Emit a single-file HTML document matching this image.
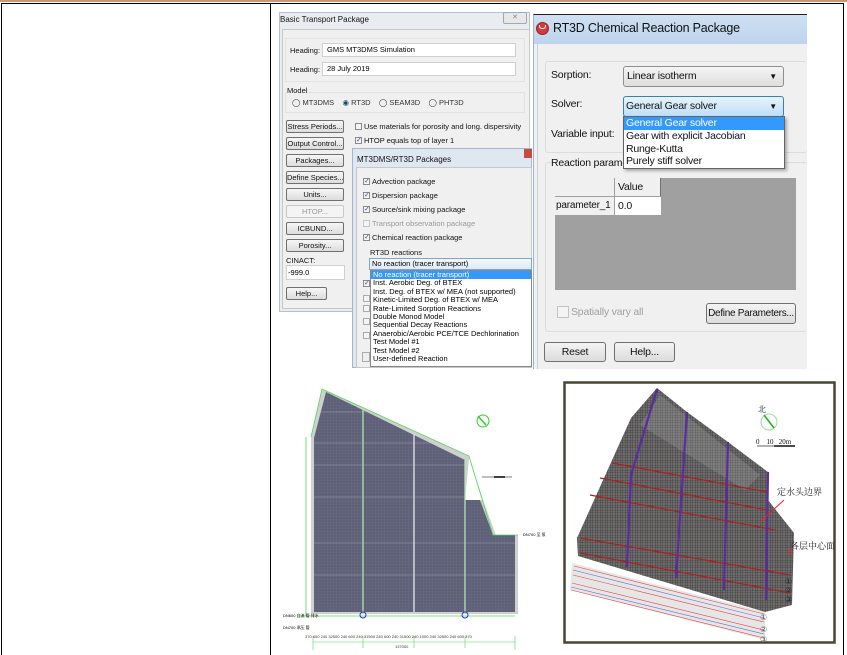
<!DOCTYPE html>
<html><head><meta charset="utf-8">
<style>
*{margin:0;padding:0;box-sizing:border-box}
body{width:847px;height:652px;background:#fff;position:relative;overflow:hidden;font-family:"Liberation Sans",Tahoma,sans-serif}
.a{position:absolute}
.t8{font-size:7.5px;color:#111;white-space:nowrap}
.btn{position:absolute;border:1px solid #707070;border-radius:2px;background:linear-gradient(#f6f6f6,#dcdcdc);font-size:7.5px;text-align:center;color:#111;white-space:nowrap}
.inp{position:absolute;background:#fff;border:1px solid #d0d0d0;font-size:7.5px;padding-left:4px;white-space:nowrap}
.cb{position:absolute;width:7px;height:7px;border:1px solid #8a8a8a;background:#f4f4f4;font-size:7px;line-height:6px;text-align:center;color:#2a4a9a}
.r{font-size:10.5px;letter-spacing:-0.2px;color:#111;white-space:nowrap;position:absolute}
</style></head><body>
<div class="a" style="left:0;top:0;width:847px;height:2px;background:#c8987a"></div>
<div class="a" style="left:1px;top:3px;width:843px;height:652px;border:1px solid #000;border-bottom:none"></div>
<div class="a" style="left:270px;top:3px;width:1px;height:652px;background:#000"></div>

<!-- Basic Transport Package -->
<div class="a" style="left:279px;top:12px;width:251px;height:300px;background:#e9edf2;border:1px solid #b8c0cc"></div>
<div class="a t8" style="left:280px;top:15px;font-size:8px">Basic Transport Package</div>
<div class="a" style="left:503px;top:12px;width:24px;height:12px;border:1px solid #a0a8b4;border-radius:2px;background:#e8e8e8;font-size:7px;text-align:center;color:#888">✕</div>
<div class="a" style="left:282px;top:29px;width:248px;height:280px;background:#f0f0f0;border:1px solid #c8c8c8"></div>
<div class="a" style="left:285px;top:38px;width:240px;height:44px;border:1px solid #e2e2e2"></div>
<div class="a t8" style="left:290px;top:46px">Heading:</div>
<div class="inp" style="left:322px;top:43px;width:194px;height:14px;line-height:12px">GMS MT3DMS Simulation</div>
<div class="a t8" style="left:290px;top:65px">Heading:</div>
<div class="inp" style="left:322px;top:62px;width:194px;height:14px;line-height:12px">28 July 2019</div>
<div class="a" style="left:285px;top:92px;width:240px;height:21px;border:1px solid #e2e2e2"></div>
<div class="a t8" style="left:287px;top:86px;background:#f0f0f0">Model</div>
<div class="a t8" style="left:292px;top:98px;color:#333">◯ MT3DMS &nbsp;&nbsp; <span style="color:#246">◉</span> RT3D &nbsp;&nbsp; ◯ SEAM3D &nbsp;&nbsp; ◯ PHT3D</div>
<div class="btn" style="left:286px;top:120px;width:58px;height:13px;line-height:11px">Stress Periods...</div>
<div class="btn" style="left:286px;top:137px;width:58px;height:13px;line-height:11px">Output Control...</div>
<div class="btn" style="left:286px;top:154px;width:58px;height:13px;line-height:11px">Packages...</div>
<div class="btn" style="left:286px;top:171px;width:58px;height:13px;line-height:11px">Define Species...</div>
<div class="btn" style="left:286px;top:188px;width:58px;height:13px;line-height:11px">Units...</div>
<div class="btn" style="left:286px;top:205px;width:58px;height:13px;line-height:11px;color:#999;border-color:#c8c8c8;background:#f4f4f4">HTOP...</div>
<div class="btn" style="left:286px;top:222px;width:58px;height:13px;line-height:11px">ICBUND...</div>
<div class="btn" style="left:286px;top:239px;width:58px;height:13px;line-height:11px">Porosity...</div>
<div class="cb" style="left:355px;top:123px"></div>
<div class="a t8" style="left:364px;top:122px">Use materials for porosity and long. dispersivity</div>
<div class="cb" style="left:355px;top:137px">✓</div>
<div class="a t8" style="left:364px;top:136px">HTOP equals top of layer 1</div>
<div class="a t8" style="left:286px;top:256px">CINACT:</div>
<div class="inp" style="left:286px;top:265px;width:59px;height:15px;line-height:13px;padding-left:1px">-999.0</div>
<div class="btn" style="left:286px;top:287px;width:41px;height:13px;line-height:11px">Help...</div>

<!-- MT3DMS/RT3D Packages -->
<div class="a" style="left:352px;top:148px;width:180px;height:220px;background:#dfe7f1;border:1px solid #a9b6c6"></div>
<div class="a t8" style="left:357px;top:155px;font-size:8px">MT3DMS/RT3D Packages</div>
<div class="a" style="left:524px;top:149px;width:8px;height:9px;background:#c9493c"></div>
<div class="a" style="left:356px;top:167px;width:176px;height:201px;background:#f0f0f0;border:1px solid #c8c8c8"></div>
<div class="cb" style="left:363px;top:178px">✓</div><div class="a t8" style="left:372px;top:177px">Advection package</div>
<div class="cb" style="left:363px;top:192px">✓</div><div class="a t8" style="left:372px;top:191px">Dispersion package</div>
<div class="cb" style="left:363px;top:206px">✓</div><div class="a t8" style="left:372px;top:205px">Source/sink mixing package</div>
<div class="cb" style="left:363px;top:220px;border-color:#c4c4c4"></div><div class="a t8" style="left:372px;top:219px;color:#999">Transport observation package</div>
<div class="cb" style="left:363px;top:234px">✓</div><div class="a t8" style="left:372px;top:233px">Chemical reaction package</div>
<div class="a t8" style="left:370px;top:248px">RT3D reactions</div>
<div class="cb" style="left:363px;top:280px">✓</div>
<div class="cb" style="left:363px;top:295px;border-color:#aaa"></div>
<div class="cb" style="left:363px;top:305px;border-color:#aaa"></div>
<div class="cb" style="left:363px;top:318px;border-color:#aaa"></div>
<div class="cb" style="left:363px;top:332px;border-color:#aaa"></div>
<div class="a" style="left:362px;top:352px;width:8px;height:10px;border:1px solid #aaa;background:#eee"></div>
<div class="a" style="left:369px;top:258px;width:163px;height:12px;border:1px solid #7aa6d6;background:linear-gradient(#f4f8fc,#dfeaf6);font-size:7.5px;line-height:10px;padding-left:2px;white-space:nowrap">No reaction (tracer transport)</div>
<div class="a" style="left:370px;top:270px;width:162px;height:97px;background:#fff;border:1px solid #888;font-size:7.5px;line-height:8.4px;white-space:nowrap">
<div style="background:#3399ff;color:#fff;padding-left:2px">No reaction (tracer transport)</div>
<div style="padding-left:2px">Inst. Aerobic Deg. of BTEX</div>
<div style="padding-left:2px">Inst. Deg. of BTEX w/ MEA (not supported)</div>
<div style="padding-left:2px">Kinetic-Limited Deg. of BTEX w/ MEA</div>
<div style="padding-left:2px">Rate-Limited Sorption Reactions</div>
<div style="padding-left:2px">Double Monod Model</div>
<div style="padding-left:2px">Sequential Decay Reactions</div>
<div style="padding-left:2px">Anaerobic/Aerobic PCE/TCE Dechlorination</div>
<div style="padding-left:2px">Test Model #1</div>
<div style="padding-left:2px">Test Model #2</div>
<div style="padding-left:2px">User-defined Reaction</div>
</div>

<!-- RT3D Chemical Reaction Package -->
<div class="a" style="left:533px;top:14px;width:274px;height:355px;background:#f0f0f0;border-left:1px solid #9fb4cc;border-top:1px solid #222"></div>
<div class="a" style="left:534px;top:15px;width:273px;height:29px;background:linear-gradient(#cfe0f2,#bdd4ec)"></div>
<div class="a" style="left:536px;top:22px;width:13px;height:13px;border-radius:50%;background:#d13b3b;border:1px solid #922"></div>
<div class="a" style="left:539px;top:25px;width:7px;height:4px;border:1.5px solid #fff;border-top:none;border-radius:0 0 3px 3px"></div>
<div class="a" style="left:553px;top:21px;font-size:12.5px;letter-spacing:-0.2px;color:#111;white-space:nowrap">RT3D Chemical Reaction Package</div>
<div class="a" style="left:537px;top:44px;width:270px;height:325px;border-left:1px solid #c8d2dc"></div>
<div class="a" style="left:545px;top:61px;width:262px;height:92px;border:1px solid #dcdcdc;border-right:none;border-radius:3px"></div>
<div class="r" style="left:551px;top:69px">Sorption:</div>
<div class="a r" style="left:623px;top:66px;width:161px;height:21px;border:1px solid #8e8f8f;border-radius:3px;background:linear-gradient(#f4f4f4,#dedede);line-height:19px;padding-left:3px">Linear isotherm<span style="position:absolute;right:6px;font-size:8px">▼</span></div>
<div class="r" style="left:551px;top:98px">Solver:</div>
<div class="a r" style="left:623px;top:96px;width:161px;height:21px;border:1px solid #3c7fb1;border-radius:3px;background:linear-gradient(#e8f4fc,#bedef6);line-height:19px;padding-left:2px">General Gear solver<span style="position:absolute;right:6px;font-size:8px">▼</span></div>
<div class="r" style="left:551px;top:128px">Variable input:</div>
<div class="a" style="left:545px;top:162px;width:262px;height:170px;border:1px solid #dcdcdc;border-right:none;border-radius:3px"></div>
<div class="r" style="left:551px;top:157px;background:#f0f0f0">Reaction paramet</div>
<div class="a r" style="left:623px;top:116px;width:162px;height:53px;background:#fff;border:1px solid #646464;box-shadow:2px 2px 3px rgba(0,0,0,.3);line-height:12.8px">
<div style="background:#3399ff;color:#fff;padding-left:2px">General Gear solver</div>
<div style="padding-left:2px">Gear with explicit Jacobian</div>
<div style="padding-left:2px">Runge-Kutta</div>
<div style="padding-left:2px">Purely stiff solver</div>
</div>
<div class="a" style="left:555px;top:178px;width:241px;height:112px;background:#a0a0a0"></div>
<div class="a" style="left:555px;top:178px;width:60px;height:19px;background:#f0f0f0;border-right:1px solid #a0a0a0;border-bottom:1px solid #a0a0a0"></div>
<div class="a r" style="left:615px;top:178px;width:46px;height:19px;background:#f0f0f0;border-right:1px solid #707070;border-bottom:1px solid #a0a0a0;line-height:18px;padding-left:3px">Value</div>
<div class="a r" style="left:555px;top:197px;width:60px;height:18px;background:#f0f0f0;border-right:1px solid #a0a0a0;line-height:18px;padding-left:1px;overflow:hidden;font-size:10px">parameter_1</div>
<div class="a r" style="left:615px;top:197px;width:46px;height:18px;background:#fff;line-height:18px;padding-left:3px">0.0</div>
<div class="a" style="left:557px;top:306px;width:12px;height:12px;border:1px solid #c4c4c4;background:#f4f4f4"></div>
<div class="r" style="left:571px;top:306px;color:#a0a0a0">Spatially vary all</div>
<div class="a r" style="left:706px;top:303px;width:90px;height:21px;border:1px solid #707070;border-radius:3px;background:linear-gradient(#f4f4f4,#dcdcdc);line-height:19px;text-align:center;font-size:10px;letter-spacing:-0.3px">Define Parameters...</div>
<div class="a r" style="left:544px;top:342px;width:62px;height:20px;border:1px solid #707070;border-radius:3px;background:linear-gradient(#f4f4f4,#dcdcdc);line-height:18px;text-align:center">Reset</div>
<div class="a r" style="left:614px;top:342px;width:61px;height:20px;border:1px solid #707070;border-radius:3px;background:linear-gradient(#f4f4f4,#dcdcdc);line-height:18px;text-align:center">Help...</div>

<svg class="a" style="left:0;top:0" width="847" height="652">
<defs>
<pattern id="g" width="3" height="3" patternUnits="userSpaceOnUse"><rect width="3" height="3" fill="#5d6076"/><path d="M0 0H3M0 0V3" stroke="#6e7186" stroke-width=".6"/></pattern>
<pattern id="h" width="2.5" height="2.5" patternUnits="userSpaceOnUse"><rect width="2.5" height="2.5" fill="#6e6e6e"/><path d="M0 0H2.5M0 0V2.5" stroke="#2e2626" stroke-width=".6"/></pattern>
<clipPath id="cp"><polygon points="326,392 465,460 465,500 480,500 493,535 515,535 515,612 314,612 314,438"/></clipPath>
</defs>
<polygon points="322,389 469,456 483,500 496,535 518,535 518,614 311,614 311,437" fill="#d0d0d0"/>
<polygon points="326,392 465,460 465,500 480,500 493,535 515,535 515,612 314,612 314,438" fill="url(#g)"/>
<polygon points="469,458 482,500 465,500" fill="#fff"/>
<g clip-path="url(#cp)">
<path d="M314,443 H515 M314,465 H515 M314,497 H515 M314,543 H515 M314,575 H515 M314,412 H515" stroke="#8a8ca0" stroke-width=".8"/>
</g>
<path d="M322,389 L469,456 L493,535 L518,535 M311,437 L322,389 M306,437 V616 M300,616 H515" stroke="#4cdc4c" stroke-width=".8" fill="none"/>
<path d="M363,408 V612 M414,434 V612 M465,460 V612" stroke="#e8e8e8" stroke-width="1.3"/>
<path d="M363,408 V612 M465,460 V612" stroke="#5ce05c" stroke-width=".5"/>
<path d="M313,642 H515 M313,636 V650 M515,636 V650 M363,636 V648 M414,636 V648 M465,636 V648" stroke="#4cdc4c" stroke-width=".6"/>
<circle cx="483" cy="421" r="6" fill="none" stroke="#3c3" stroke-width="1"/>
<path d="M478,416 L486,425" stroke="#3c3" stroke-width="1.5"/>
<path d="M482,477 H512" stroke="#000" stroke-width=".6"/><path d="M494,477 H505" stroke="#000" stroke-width="1.5"/>
<circle cx="363" cy="615" r="3" fill="none" stroke="#23c"/><circle cx="465" cy="615" r="3" fill="none" stroke="#23c"/>
<text x="283" y="617" font-size="4" fill="#000" font-family="Liberation Sans,Noto Sans CJK SC,sans-serif">DN600 自流 管 排水</text>
<text x="283" y="629" font-size="4" fill="#000" font-family="Liberation Sans,Noto Sans CJK SC,sans-serif">DN700 承压 管</text>
<text x="523" y="536" font-size="4" fill="#000" font-family="Liberation Sans,Noto Sans CJK SC,sans-serif">DN700 至 泵</text>
<text x="305" y="638" font-size="4" fill="#333">370 600 240   32500   240 600 240   31500   240 600 240   31500   240 1000 240   32500   240 600 370</text>
<text x="395" y="648" font-size="4" fill="#333">137000</text>

<rect x="564.5" y="382.5" width="270" height="260" fill="#fff" stroke="#4a4530" stroke-width="2.5"/>
<polygon points="572,563 765,612 765,640 570,590" fill="#e6e6e6"/>
<path d="M574,566 L764,614 M573,575 L764,622 M572,583 L764,630 M571,590 L764,638" stroke="#d44" stroke-width=".6"/>
<path d="M573,570 L764,618 M571,587 L764,634" stroke="#66c" stroke-width=".6"/>
<polygon points="631,418 657,388 687,412 728,442 768,472 768,500 794,533 792,605 765,612 578,556 577,538" fill="url(#h)"/>
<polygon points="640,425 660,395 760,475 745,490" fill="#9a9a9a" opacity=".35"/>
<path d="M612,463 L767,492 M600,478 L767,510 M580,538 L790,575 M580,553 L790,593 M590,495 L775,530" stroke="#a22" stroke-width="1.3"/>
<path d="M657,389 L631,475 L627,567 M687,412 L676,578 M728,442 L724,590 M768,472 L766,600" stroke="#5a2ca0" stroke-width="2.2" fill="none"/>
<circle cx="769" cy="422" r="8" fill="none" stroke="#9d9" stroke-width="1"/>
<path d="M764,415 L774,428" stroke="#2a2" stroke-width="1.5"/>
<text x="758" y="412" font-size="8" fill="#222" font-family="Liberation Serif,Noto Serif CJK SC,serif">北</text>
<text x="756" y="444" font-size="7" fill="#111" font-family="Liberation Serif,serif">0 &#160;&#160;&#160;10 &#160;&#160;20m</text>
<path d="M757,446 H795" stroke="#111" stroke-width="1.5"/><path d="M757,446 H774" stroke="#ddd" stroke-width="1"/>
<text x="777" y="495" font-size="9" fill="#222" font-family="Liberation Serif,Noto Serif CJK SC,serif">定水头边界</text>
<text x="790" y="549" font-size="9" fill="#222" font-family="Liberation Serif,Noto Serif CJK SC,serif">各层中心面</text>
<path d="M760,522 L784,500 M787,555 L793,548" stroke="#e22" stroke-width="1"/>
<text x="785" y="584" font-size="8" fill="#222">①</text><text x="785" y="593" font-size="8" fill="#222">②</text><text x="785" y="602" font-size="8" fill="#222">③</text>
<text x="760" y="620" font-size="8" fill="#555">①</text><text x="760" y="632" font-size="8" fill="#555">②</text><text x="760" y="642" font-size="8" fill="#555">③</text>
</svg>
</body></html>
